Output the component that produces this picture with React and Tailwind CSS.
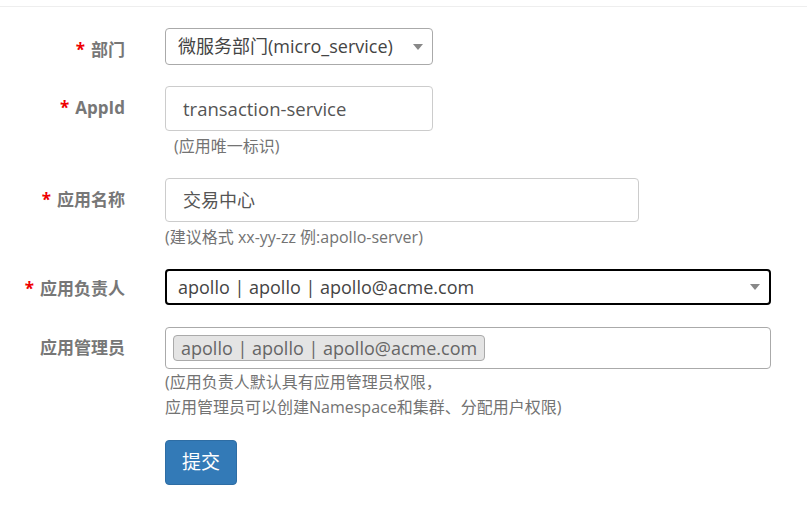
import React from 'react';

const font = "font-['Open_Sans','Noto_Sans_CJK_SC',sans-serif]";

const Caret = () => (
    <svg width="10" height="6" viewBox="0 0 10 6" className="shrink-0">
        <path d="M0 0 L10 0 L5 6 Z" fill="#888" />
    </svg>
);

const Label = ({ required, children, h }) => (
    <div className={`w-[125px] shrink-0 flex items-center justify-end text-[17px] font-bold text-[#777] ${h}`}>
        {required && <span className="text-[#e00] mr-[6px]">*</span>}
        <span>{children}</span>
    </div>
);

const Help = ({ children, className = '' }) => (
    <div className={`text-[16px] text-[#737373] ${className}`}>{children}</div>
);

export default function App() {
    return (
        <div className={`w-[807px] h-[507px] bg-white overflow-hidden ${font}`}>
            <div className="h-[7px] border-b border-[#eeeeee]"></div>

            <form className="pt-[21px] flex flex-col">
                {/* 部门 */}
                <div className="flex items-start gap-[40px] mb-[21px]">
                    <Label required h="h-[37px] pt-[6px]">部门</Label>
                    <div className="w-[268px] h-[37px] border border-[#aaa] rounded-[4px] flex items-center justify-between pl-[12px] pr-[9px] text-[18px] text-[#444]">
                        <span>微服务部门(micro_service)</span>
                        <Caret />
                    </div>
                </div>

                {/* AppId */}
                <div className="flex items-start gap-[40px] mb-[21px]">
                    <Label required h="h-[45px] pb-[2px]">AppId</Label>
                    <div className="flex flex-col">
                        <div className="w-[268px] h-[45px] border border-[#ccc] rounded-[4px] flex items-center pl-[17px] text-[18.5px] text-[#555]">
                            transaction-service
                        </div>
                        <Help className="mt-[4px] leading-[22px] ml-[9px]">(应用唯一标识)</Help>
                    </div>
                </div>

                {/* 应用名称 */}
                <div className="flex items-start gap-[40px] mb-[21px]">
                    <Label required h="h-[44px]">应用名称</Label>
                    <div className="flex flex-col">
                        <div className="w-[474px] h-[44px] border border-[#ccc] rounded-[4px] flex items-center pl-[17px] text-[18px] text-[#555]">
                            交易中心
                        </div>
                        <Help className="mt-[4px] leading-[22px]">(建议格式 xx-yy-zz 例:apollo-server)</Help>
                    </div>
                </div>

                {/* 应用负责人 */}
                <div className="flex items-start gap-[40px] mb-[22px]">
                    <Label required h="h-[36px] pt-[3px]">应用负责人</Label>
                    <div className="w-[606px] h-[36px] border-2 border-black rounded-[4px] flex items-center justify-between pl-[11px] pr-[9px] text-[18px] text-[#444]">
                        <span>apollo | apollo | apollo@acme.com</span>
                        <Caret />
                    </div>
                </div>

                {/* 应用管理员 */}
                <div className="flex items-start gap-[40px] mb-[20px]">
                    <Label h="h-[42px]">应用管理员</Label>
                    <div className="flex flex-col">
                        <div className="w-[606px] h-[42px] border border-[#aaa] rounded-[4px] flex items-center pl-[7px]">
                            <span className="h-[26px] flex items-center px-[7px] bg-[#e4e4e4] border border-[#aaa] rounded-[4px] text-[18px] text-[#666]">
                                apollo | apollo | apollo@acme.com
                            </span>
                        </div>
                        <Help className="mt-[1px] leading-[25px]">
                            <div>(应用负责人默认具有应用管理员权限，</div>
                            <div>应用管理员可以创建Namespace和集群、分配用户权限)</div>
                        </Help>
                    </div>
                </div>

                {/* 提交 */}
                <div className="flex gap-[40px]">
                    <div className="w-[125px] shrink-0"></div>
                    <button
                        type="button"
                        className="w-[72px] h-[45px] bg-[#337ab7] border border-[#2e6da4] rounded-[4px] text-white text-[19px]"
                    >
                        提交
                    </button>
                </div>
            </form>
        </div>
    );
}
